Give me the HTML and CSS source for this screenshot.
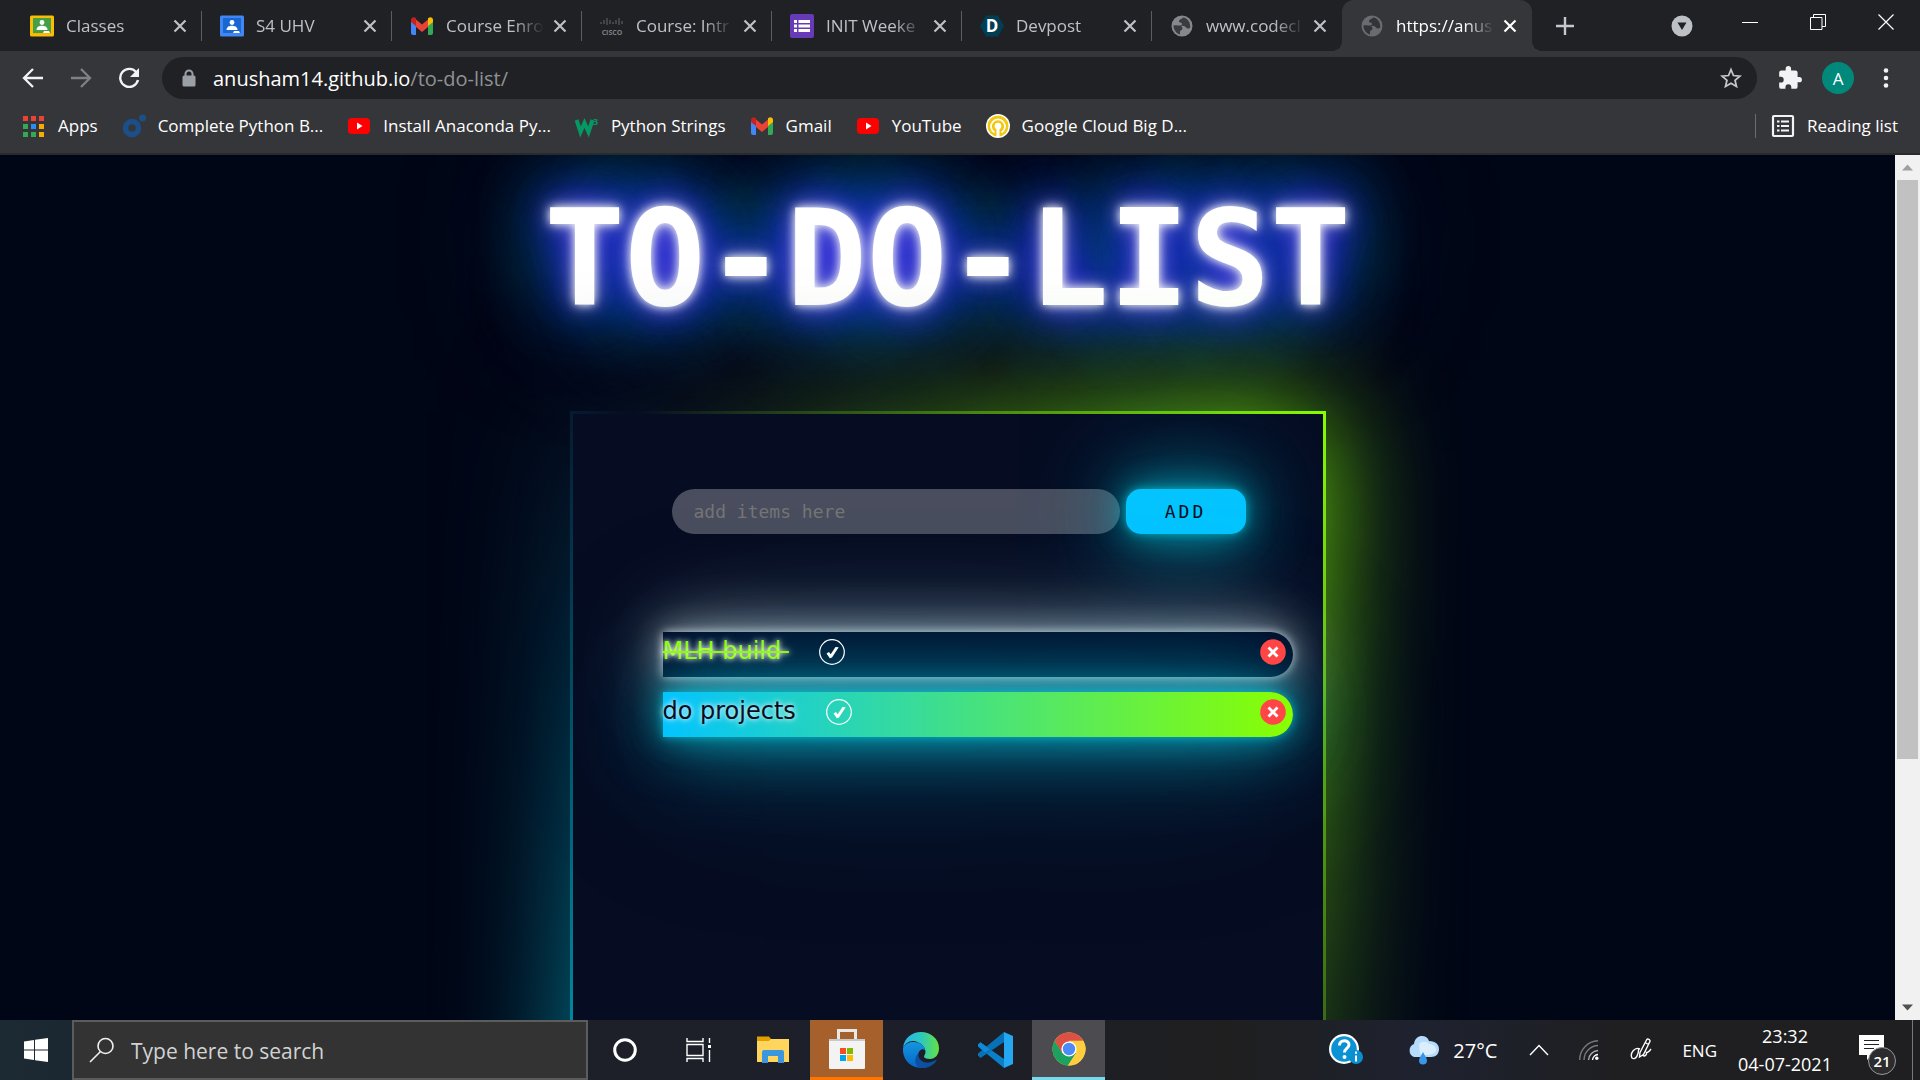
FILE: index.html
```html
<!DOCTYPE html>
<html lang="en">
<head>
<meta charset="utf-8">
<title>To-do list</title>
<link rel="stylesheet" href="styles.css">
</head>
<body>
<svg class="defs" aria-hidden="true">
  <symbol id="close" viewBox="0 0 14 14"><path d="M1.500 1.500l11 11M12.500 1.500l-11 11" stroke="currentColor" stroke-width="2.200" fill="none"/></symbol>
  <symbol id="gmail" viewBox="0 0 24 24"><path d="M1 6v13a2 2 0 0 0 2 2h3V9z" fill="#4285f4"/><path d="M23 6v13a2 2 0 0 1-2 2h-3V9z" fill="#34a853"/><path d="M6 5.500l6 5 6-5V13l-6 5-6-5z" fill="#ea4335"/><path d="M1 6.500V6c0-2.500 2.800-3.500 4.600-2L6 4.400V12l-5-4z" fill="#c5221f"/><path d="M23 6.500V6c0-2.500-2.800-3.500-4.600-2L18 4.400V12l5-4z" fill="#fbbc04"/></symbol>
  <symbol id="youtube" viewBox="0 0 24 24"><rect x="1" y="4" width="22" height="16" rx="4" fill="#f00"/><path d="M10 8.500v7l5.500-3.500z" fill="#fff"/></symbol>
  <symbol id="globe" viewBox="0 0 24 24"><circle cx="12" cy="12" r="10.500" fill="currentColor"/><path d="M13 3.500c-1 2-4 1.500-4 4 0 1.500 3 .8 3 2.500s-2 1.500-4 1.500-4-.5-4.500 0c0 4.500 3 8 6.500 9v-3c0-1 2.500-1.500 2.500-3s-1.500-2-1-2.500c2-.5 3.500.5 5 2 1 .8 3 .5 3.700-.5C20.500 8 17.500 4 13 3.500z" fill="#202124" opacity=".75"/></symbol>
  <symbol id="person" viewBox="0 0 24 24"><circle cx="12" cy="8.500" r="2.400" fill="#fff"/><path d="M6.500 16c0-3.500 3-4.300 5.500-4.300s5.500.8 5.500 4.300z" fill="#fff"/></symbol>
  <symbol id="tick" viewBox="0 0 26 26"><circle cx="13" cy="13" r="12.300" fill="none" stroke="#fff" stroke-width="1.200"/><path d="M7.500 14.500l2.500-1.500 1.700 2.300L16.500 8l3.200.2-6.700 10.300-2.200.8z" fill="#fff"/></symbol>
  <symbol id="cross" viewBox="0 0 26 26"><circle cx="13" cy="13" r="12.800" fill="#ff4545"/><path d="M8.500 8.500l9 9M17.500 8.500l-9 9" stroke="#fff" stroke-width="2.800"/></symbol>
</svg>

<div class="browser">
  <nav class="tabs" aria-label="Open tabs">
    <div class="tab">
      <svg class="fav" viewBox="0 0 24 24"><rect y="1.500" width="24" height="21" rx="1.500" fill="#fbbc04"/><rect x="3" y="4" width="18" height="15" fill="#43a047"/><rect x="3" y="19" width="18" height="1" fill="#f7b500"/><use href="#person"/><path d="M13 19h7l-1-2h-5z" fill="#fff"/></svg>
      <span class="tab-title">Classes</span>
      <button class="tab-close" aria-label="Close tab"><svg><use href="#close"/></svg></button>
    </div>
    <div class="tab">
      <svg class="fav" viewBox="0 0 24 24"><rect y="1.500" width="24" height="21" rx="1.500" fill="#4285f4"/><rect x="3" y="4" width="18" height="15" fill="#1967d2"/><use href="#person"/><path d="M13 19h7l-1-2h-5z" fill="#fff"/></svg>
      <span class="tab-title">S4 UHV</span>
      <button class="tab-close" aria-label="Close tab"><svg><use href="#close"/></svg></button>
    </div>
    <div class="tab">
      <svg class="fav"><use href="#gmail"/></svg>
      <span class="tab-title">Course Enro</span>
      <button class="tab-close" aria-label="Close tab"><svg><use href="#close"/></svg></button>
    </div>
    <div class="tab">
      <svg class="fav" viewBox="0 0 24 24"><path d="M1 8v2M4 6v4M7 4v7M10 6v4M13 8v2M16 6v4M19 4v7M22 7v3" stroke="#55585c" stroke-width="1.300"/><text class="cisco" x="12" y="21" text-anchor="middle">CISCO</text></svg>
      <span class="tab-title">Course: Intr</span>
      <button class="tab-close" aria-label="Close tab"><svg><use href="#close"/></svg></button>
    </div>
    <div class="tab">
      <svg class="fav" viewBox="0 0 24 24"><rect width="24" height="24" rx="2" fill="#673ab7"/><path d="M4 7.500h3M4 12h3M4 16.500h3M8.500 7.500H20M8.500 12H20M8.500 16.500H20" stroke="#fff" stroke-width="3"/></svg>
      <span class="tab-title">INIT Weeke</span>
      <button class="tab-close" aria-label="Close tab"><svg><use href="#close"/></svg></button>
    </div>
    <div class="tab">
      <svg class="fav" viewBox="0 0 24 24"><path d="M6 1.500h12L24 12l-6 10.500H6L0 12z" fill="#003e54"/><text class="devpost" x="12" y="18" text-anchor="middle">D</text></svg>
      <span class="tab-title">Devpost</span>
      <button class="tab-close" aria-label="Close tab"><svg><use href="#close"/></svg></button>
    </div>
    <div class="tab">
      <svg class="fav globe"><use href="#globe"/></svg>
      <span class="tab-title">www.codecl</span>
      <button class="tab-close" aria-label="Close tab"><svg><use href="#close"/></svg></button>
    </div>
    <div class="tab active">
      <svg class="fav globe"><use href="#globe"/></svg>
      <span class="tab-title">https://anus</span>
      <button class="tab-close" aria-label="Close tab"><svg><use href="#close"/></svg></button>
    </div>
    <button class="new-tab" aria-label="New tab"><svg width="18" height="18" viewBox="0 0 18 18"><path d="M9 0v18M0 9h18" stroke="#c4c7cb" stroke-width="2.400"/></svg></button>
    <div class="window-controls">
      <button class="search-tabs" aria-label="Search tabs"><svg width="22" height="22" viewBox="0 0 22 22"><circle cx="11" cy="11" r="10.500" fill="#bdc1c6"/><path d="M6.500 7.500h9L11 15z" fill="#202124"/></svg></button>
      <button aria-label="Minimize"><svg width="16" height="16" viewBox="0 0 16 16"><path d="M0 8.500h16" stroke="#fff"/></svg></button>
      <button aria-label="Restore"><svg width="16" height="16" viewBox="0 0 16 16"><path d="M.5 3.500h11.500v12H.5zM3.500 3.500v-3h12v12h-3.500" fill="none" stroke="#fff"/></svg></button>
      <button aria-label="Close"><svg width="16" height="16" viewBox="0 0 16 16"><path d="M.5.5l15 15M15.500.5l-15 15" stroke="#fff" stroke-width="1.200"/></svg></button>
    </div>
  </nav>

  <div class="toolbar">
    <button aria-label="Back"><svg width="22" height="22" viewBox="0 0 22 22"><path d="M21 11H2.500M11 2l-9 9 9 9" fill="none" stroke="#f1f3f4" stroke-width="2.300"/></svg></button>
    <button aria-label="Forward"><svg width="22" height="22" viewBox="0 0 22 22"><path d="M1 11h18.500M11 2l9 9-9 9" fill="none" stroke="#7e8185" stroke-width="2.300"/></svg></button>
    <button aria-label="Reload"><svg width="22" height="22" viewBox="0 0 22 22"><path d="M18.500 5.500A9 9 0 1 0 20 13" fill="none" stroke="#f1f3f4" stroke-width="2.400"/><path d="M21 1v9h-9z" fill="#f1f3f4"/></svg></button>
    <div class="omnibox">
      <svg width="14" height="18" viewBox="0 0 14 18"><path d="M3.500 7V5a3.500 3.500 0 0 1 7 0v2" fill="none" stroke="#9aa0a6" stroke-width="2"/><rect x="0.500" y="6.500" width="13" height="11" rx="1.500" fill="#9aa0a6"/></svg>
      <span class="url">anusham14.github.io<span class="path">/to-do-list/</span></span>
      <button class="star" aria-label="Bookmark this page"><svg width="22" height="22" viewBox="0 0 24 24"><path d="M12 2.800l2.700 6.500 7 .6-5.300 4.600 1.600 6.800-6-3.600-6 3.600 1.600-6.800L2.300 9.900l7-.6z" fill="none" stroke="#c4c7cb" stroke-width="1.900"/></svg></button>
    </div>
    <button aria-label="Extensions"><svg width="26" height="26" viewBox="0 0 24 24"><path fill="#f1f3f4" d="M20.500 11H19V7a2 2 0 0 0-2-2h-4V3.500a2.500 2.500 0 0 0-5 0V5H4a2 2 0 0 0-2 2v3.800h1.500a2.700 2.700 0 0 1 0 5.400H2V20a2 2 0 0 0 2 2h3.800v-1.500a2.700 2.700 0 0 1 5.400 0V22H17a2 2 0 0 0 2-2v-4h1.500a2.500 2.500 0 0 0 0-5z"/></svg></button>
    <button class="avatar" aria-label="Profile">A</button>
    <button aria-label="Menu"><svg width="6" height="20" viewBox="0 0 6 20"><g fill="#f1f3f4"><circle cx="3" cy="2.500" r="2.300"/><circle cx="3" cy="10" r="2.300"/><circle cx="3" cy="17.500" r="2.300"/></g></svg></button>
  </div>

  <nav class="bookmarks" aria-label="Bookmarks">
    <a href="#"><svg viewBox="0 0 24 24"><g fill="#ea4335"><path d="M1 2h5v5H1zM9 2h5v5H9zM17 2h5v5h-5z"/></g><path d="M1 10h5v5H1zM1 18h5v5H1zM9 18h5v5H9z" fill="#34a853"/><path d="M9 10h5v5H9z" fill="#2a8cf4"/><path d="M17 10h5v5h-5zM17 18h5v5h-5z" fill="#f9ab00"/></svg>Apps</a>
    <a href="#"><svg viewBox="0 0 24 24"><circle cx="10" cy="14" r="6.500" fill="none" stroke="#1c4f8a" stroke-width="5.500"/><circle cx="20.500" cy="4" r="3.500" fill="#1c4f8a"/></svg>Complete Python B...</a>
    <a href="#"><svg><use href="#youtube"/></svg>Install Anaconda Py...</a>
    <a href="#"><svg viewBox="0 0 24 24"><path d="M1.500 6l4 12 4-9 4 9 4-12" fill="none" stroke="#059862" stroke-width="4"/><text class="w-three" x="18" y="11">3</text></svg>Python Strings</a>
    <a href="#"><svg><use href="#gmail"/></svg>Gmail</a>
    <a href="#"><svg><use href="#youtube"/></svg>YouTube</a>
    <a href="#"><svg viewBox="0 0 24 24"><circle cx="12" cy="12" r="12" fill="#fff"/><circle cx="12" cy="12" r="10.500" fill="#f2c811"/><path d="M8.500 18.500A7 7 0 1 1 15.500 18.500" fill="none" stroke="#fff" stroke-width="1.700"/><circle cx="12" cy="12" r="3.300" fill="#fff"/><path d="M12 12v11" stroke="#fff" stroke-width="3"/></svg>Google Cloud Big D...</a>
    <a href="#" class="reading"><svg viewBox="0 0 24 24"><rect x="2" y="2" width="20" height="20" rx="1" fill="none" stroke="#f1f3f4" stroke-width="2.200"/><path d="M6 7.500h2.500M6 12h2.500M6 16.500h2.500M10 7.500h8M10 12h8M10 16.500h8" stroke="#f1f3f4" stroke-width="2"/></svg>Reading list</a>
  </nav>

  <div class="viewport">
    <main class="page">
      <h1>TO-DO-LIST</h1>
      <section class="box">
        <form class="add">
          <input type="text" placeholder="add items here" aria-label="New item">
          <button type="button">ADD</button>
        </form>
        <ul class="list">
          <li class="done"><span class="item-text">MLH build&nbsp;</span><button aria-label="Mark as done"><svg><use href="#tick"/></svg></button><button class="remove" aria-label="Remove"><svg><use href="#cross"/></svg></button></li>
          <li><span class="item-text">do projects</span><button aria-label="Mark as done"><svg><use href="#tick"/></svg></button><button class="remove" aria-label="Remove"><svg><use href="#cross"/></svg></button></li>
        </ul>
      </section>
    </main>
    <div class="scrollbar" aria-hidden="true">
      <svg viewBox="0 0 25 25"><path d="M7 15.500l5.500-6 5.500 6z" fill="#a0a0a0"/></svg>
      <div class="track"><div class="thumb"></div></div>
      <svg viewBox="0 0 25 25"><path d="M7 9.500l5.500 6 5.500-6z" fill="#505050"/></svg>
    </div>
  </div>
</div>

<footer class="taskbar">
  <button class="start" aria-label="Start"><svg width="24" height="24" viewBox="0 0 24 24"><path d="M0 3.500L10 2v9.500H0zM11 1.800L24 0v11.500H11zM0 12.500h10V22L0 20.500zM11 12.500h13V24l-13-1.800z" fill="#fff"/></svg></button>
  <label class="search">
    <svg width="26" height="26" viewBox="0 0 26 26"><circle cx="16.500" cy="9" r="7.500" fill="none" stroke="#f0f0f0" stroke-width="1.600"/><path d="M11.500 14.500L1 25" stroke="#f0f0f0" stroke-width="1.600"/></svg>
    <input type="text" placeholder="Type here to search" aria-label="Search">
  </label>
  <div class="apps">
    <button aria-label="Cortana"><svg width="26" height="26" viewBox="0 0 26 26"><circle cx="13" cy="13" r="10.300" fill="none" stroke="#fff" stroke-width="3"/></svg></button>
    <button aria-label="Task view"><svg width="26" height="24" viewBox="0 0 26 24"><path d="M1 0v3.500h16V0M1 24v-3.500h16V24M1 6.500h16v11H1zM23.500 0v5M23.500 12v12" fill="none" stroke="#fff" stroke-width="1.400"/><path d="M22 7h3v3h-3z" fill="#fff"/></svg></button>
    <button aria-label="File Explorer"><svg width="32" height="32" viewBox="0 0 32 32"><path d="M0 2.500h12l2 2.500v4H0z" fill="#e0a000"/><path d="M0 7h12l2-2h18v23H0z" fill="#ffd55e"/><path d="M5 29V18q0-2 2-2h18q2 0 2 2v11h-6v-7H11v7z" fill="#3b97dd"/></svg></button>
    <button class="store" aria-label="Microsoft Store"><svg width="36" height="42" viewBox="0 0 36 42"><path d="M9.500 14V2.500h17V14" fill="none" stroke="#e8e8e8" stroke-width="3"/><path d="M0 11h36v29q0 1-1 1H1q-1 0-1-1z" fill="#f3f3f3"/><path d="M0 11h36v2H0z" fill="#c9c9c9"/><path d="M11 20h6v6h-6z" fill="#f25022"/><path d="M18 20h6v6h-6z" fill="#7fba00"/><path d="M11 27h6v6h-6z" fill="#00a4ef"/><path d="M18 27h6v6h-6z" fill="#ffb900"/></svg></button>
    <button aria-label="Edge"><svg width="36" height="36" viewBox="0 0 36 36"><defs><linearGradient id="edge-top" x2="1"><stop stop-color="#2ab1e8"/><stop offset=".5" stop-color="#2cc8c0"/><stop offset="1" stop-color="#63e23f"/></linearGradient><linearGradient id="edge-low" y2="1" x2="0"><stop stop-color="#1595df"/><stop offset="1" stop-color="#0667c4"/></linearGradient></defs><path d="M0 16C1 6 9 0 18 0c10 0 18 7 18 16 0 7-4 11-9 11-4 0-6-1-6-2.500 0-1 1.500-2 1.500-4.500C22.500 14 16 9 10 9c-5 0-8 3-10 7z" fill="url(#edge-top)"/><path d="M0 16c2-4 6-6.500 11-6 7 0 11 5 11 8-3-2-7 1-7 6 0 5 6 10 13 8-3 3-6 4-10 4C8 36-1 28 0 16z" fill="url(#edge-low)"/><path d="M15.500 21c-1 6 4 10 10 9.500 4-.3 6-2 7.500-2.500.5 0 .8.300.5.800C30 34 24 36.500 18 36c-6-1-8-9-2.500-15z" fill="#0d4fa0"/></svg></button>
    <button aria-label="Visual Studio Code"><svg width="36" height="36" viewBox="0 0 36 36"><path d="M1 12.500l2.500-2L27 27v9L1 14.500z" fill="#0a80c8"/><path d="M1 23.500l2.500 2.500L27 10V0L1 21.500z" fill="#0672b5"/><path d="M27 0l9 4v28l-9 4z" fill="#25a6f0"/><path d="M1 12.500l2.500-2.300L13 17.500 8 20.500 1 14z" fill="#0f8ad6"/></svg></button>
    <button class="running" aria-label="Chrome"><svg width="34" height="34" viewBox="0 0 34 34"><circle cx="17" cy="17" r="16.500" fill="#ffcd40"/><path d="M2.700 8.700A16.500 16.500 0 0 1 31.300 8.700L17 9.500 9.500 21z" fill="#dd5144"/><path d="M2.700 8.700A16.500 16.500 0 0 0 16 33.500l8-12.500-14 0z" fill="#1aa260"/><path d="M16 33.500A16.500 16.500 0 0 0 31.300 8.700H17l7 12.500z" fill="#ffcd40"/><circle cx="17" cy="17" r="7.600" fill="#fff"/><circle cx="17" cy="17" r="6.200" fill="#4c8bf5"/></svg></button>
  </div>
  <div class="tray">
    <svg class="help" width="34" height="34" viewBox="0 0 34 34"><circle cx="15" cy="16" r="15" fill="#fff"/><circle cx="15" cy="16" r="12.800" fill="#0a92d4"/><path d="M10.500 12.500c0-6.500 9.500-6 9.500-.8 0 3.800-4.500 3.800-4.500 7.800" fill="none" stroke="#fff" stroke-width="3"/><circle cx="15.500" cy="24" r="2" fill="#fff"/><circle cx="27" cy="24" r="7" fill="#0a8fd0"/><path d="M27 22.500v6M27 18.500v2.300" stroke="#fff" stroke-width="2"/></svg>
    <span class="weather"><svg width="32" height="30" viewBox="0 0 32 30"><path d="M7 22a7 7 0 0 1 0-13C8-1 20-1 22 6c7 0 10 4 10 8 0 5-3 8-8 8z" fill="#b5dcfb"/><path d="M12 9c3-3 8-3 10 0 4 0 8 3 7 7-2 4-12 5-16 3z" fill="#dbeefe"/><path d="M16 17c2 4 4 6 4 8.500a4 4 0 0 1-8 0C12 23 14 21 16 17z" fill="#3b96e8"/></svg>27°C</span>
    <svg class="chevron" width="20" height="12" viewBox="0 0 20 12"><path d="M1 11l9-9.500L19 11" fill="none" stroke="#fff" stroke-width="1.400"/></svg>
    <svg class="wifi" width="20" height="20" viewBox="0 0 20 20"><g fill="none" stroke-width="1.400"><path d="M.7 20A19 19 0 0 1 19 .8M5 20A14.500 14.500 0 0 1 19 5.500" stroke="#77787c"/><path d="M9.500 20a10 10 0 0 1 9.500-9.500" stroke="#b0b0b2"/><path d="M13.500 20a6 6 0 0 1 5.500-5.500" stroke="#fff"/></g><circle cx="17.800" cy="18.200" r="1.700" fill="#fff"/></svg>
    <svg class="pen" width="22" height="26" viewBox="0 0 22 26"><path d="M10 15.500L16.500 3c1-2 4.300-.4 3.300 1.700L13.500 17.500 9.500 20zM15 5.500l3.500 2M10 12c-5-2.500-10.500 4-8 9 4 3 7-5 6.500-9.500M13 18.500c2 1.500 4-1 3.500-3 1.500.5 3-1.500 4.500-3.500" fill="none" stroke="#fff" stroke-width="1.400"/></svg>
    <span class="lang">ENG</span>
    <span class="clock"><span>23:32</span><span>04-07-2021</span></span>
    <span class="notify"><svg width="26" height="26" viewBox="0 0 26 26"><path d="M0 0h25v20H13l-5 5v-5H0z" fill="#fff"/><path d="M5 5.500h15M5 9.500h15M5 13.500h10" stroke="#222" stroke-width="1.200"/></svg><span class="count">21</span></span>
  </div>
</footer>
</body>
</html>
```
FILE: styles.css
```css
* { box-sizing: border-box; }

body {
  margin: 0;
  height: 100vh;
  display: flex;
  flex-direction: column;
  overflow: hidden;
  background: #000616;
  color: #fff;
  font-family: "Open Sans", "Noto Sans", sans-serif;
  font-size: 17px;
}

button {
  display: flex;
  align-items: center;
  justify-content: center;
  padding: 0;
  border: 0;
  background: none;
  color: inherit;
  font: inherit;
}

svg { display: block; flex: none; }
.defs { position: absolute; width: 0; height: 0; }

.browser {
  flex: 1;
  min-height: 0;
  display: flex;
  flex-direction: column;
}

/* Tab strip */
.tabs {
  height: 51px;
  flex: none;
  display: flex;
  padding-left: 12px;
  background: #202124;
}

.tab {
  flex: 0 1 190px;
  min-width: 0;
  display: flex;
  align-items: center;
  padding: 0 14px 0 18px;
  position: relative;
  color: #bdc1c6;
}

.tab:not(.active)::after {
  content: "";
  position: absolute;
  right: 0;
  top: 11px;
  width: 1px;
  height: 30px;
  background: #5b5d61;
}

.tab:nth-child(7)::after { display: none; }

.tab.active {
  border-radius: 12px 12px 0 0;
  background: #35363a;
  color: #fff;
}

.tab.active::before,
.tab.active::after {
  content: "";
  position: absolute;
  bottom: 0;
  width: 10px;
  height: 10px;
}

.tab.active::before { right: 100%; background: radial-gradient(circle at 0 0, transparent 10px, #35363a 10px); }
.tab.active::after { left: 100%; background: radial-gradient(circle at 100% 0, transparent 10px, #35363a 10px); }

.fav { width: 24px; height: 24px; }
.globe { color: #85888c; }
.active .globe { color: #686b70; }
.cisco { font: bold 7px "Open Sans", sans-serif; fill: #7c7f83; }
.devpost { font: bold 17px "Open Sans", sans-serif; fill: #fff; }
.w-three { font: bold 9px "Open Sans", sans-serif; fill: #059862; }

.tab-title {
  flex: 1;
  min-width: 0;
  margin: 0 4px 0 12px;
  white-space: nowrap;
  -webkit-mask-image: linear-gradient(90deg, #000 68px, transparent 98px);
  mask-image: linear-gradient(90deg, #000 68px, transparent 98px);
}

.tab-close { width: 16px; height: 24px; }
.tab-close svg { width: 14px; height: 14px; }

.new-tab { width: 66px; }

.window-controls {
  display: flex;
  margin-left: auto;
  height: 44px;
}

.window-controls button { width: 68px; }
.window-controls .search-tabs { height: 51px; }

/* Toolbar */
.toolbar {
  height: 54px;
  flex: none;
  display: flex;
  align-items: center;
  padding: 0 10px 0 9px;
  background: #35363a;
}

.toolbar > button { width: 48px; }

.omnibox {
  flex: 1;
  height: 42px;
  display: flex;
  align-items: center;
  margin: 0 9px;
  padding: 0 15px 0 20px;
  border-radius: 21px;
  background: #202124;
}

.url { flex: 1; margin-left: 17px; font-size: 20px; }
.path { color: #8f9297; }

.toolbar .avatar {
  width: 32px;
  height: 32px;
  margin: 0 8px;
  border-radius: 50%;
  background: #00897b;
}

/* Bookmarks bar */
.bookmarks {
  height: 50px;
  flex: none;
  display: flex;
  align-items: center;
  gap: 24px;
  padding: 0 22px 7px;
  border-bottom: 2px solid #292a2c;
  background: #35363a;
}

.bookmarks a {
  display: flex;
  align-items: center;
  gap: 12px;
  color: #fff;
  text-decoration: none;
  white-space: nowrap;
}

.bookmarks svg { width: 24px; height: 24px; }

.bookmarks .reading {
  margin-left: auto;
  padding-left: 15px;
  border-left: 1px solid #6a6c70;
}

/* Page */
.viewport {
  flex: 1;
  min-height: 0;
  display: flex;
  overflow: hidden;
}

.page {
  flex: 1;
  display: flex;
  flex-direction: column;
  align-items: center;
  overflow: hidden;
  background: #000616;
}

h1 {
  margin: 0;
  padding: 26px 0 77px;
  font: bold 134px/156px "DejaVu Sans Mono", monospace;
  text-shadow:
    0 0 10px #fff,
    0 0 20px rgba(255, 255, 255, 0.6),
    0 0 40px #2d14e6,
    0 0 50px #2d14e6,
    0 0 80px #0a64c8,
    0 0 90px #0073a0,
    0 0 100px #007896,
    0 0 150px #006e78;
}

.box {
  position: relative;
  z-index: 0;
  flex: none;
  width: 750px;
  max-width: 90%;
  min-height: 900px;
  padding: 75px 30px 0 90px;
}

.box::before,
.box::after {
  content: "";
  position: absolute;
  inset: -3px;
  z-index: -1;
  background: linear-gradient(235deg, #89ff00, #060c21, #00bcd4);
}

.box::after { filter: blur(60px); z-index: -2; }

.box::before {
  border: 3px solid transparent;
  background: linear-gradient(#060c21, #060c21) padding-box, linear-gradient(235deg, #89ff00, #060c21, #00bcd4) border-box;
}

.add {
  display: flex;
  gap: 6px;
  padding: 0 47px 0 9px;
}

.add input {
  flex: 1;
  min-width: 0;
  height: 45px;
  padding: 0 22px;
  border: 0;
  border-radius: 23px;
  background: rgba(255, 255, 255, 0.27);
  color: #fff;
  font: 18px "DejaVu Sans Mono", monospace;
}

.add input::placeholder { color: #757575; }

.add button,
.list li {
  box-shadow:
    0 0 10px rgba(3, 215, 235, 0.6),
    0 0 30px rgba(3, 200, 220, 0.5),
    0 0 60px rgba(3, 200, 220, 0.5),
    0 0 100px rgba(3, 190, 220, 0.7),
    0 0 200px rgba(3, 160, 220, 0.3);
}

.add button {
  width: 120px;
  height: 45px;
  border-radius: 15px;
  background: #03c4ff;
  color: #060c21;
  font: 18px "DejaVu Sans Mono", monospace;
  letter-spacing: 3px;
}

.list {
  display: flex;
  flex-direction: column;
  gap: 15px;
  margin: 98px 0 0;
  padding: 0;
  list-style: none;
}

.list li {
  height: 45px;
  display: flex;
  align-items: flex-start;
  padding: 7px 7px 0 0;
  border-radius: 0 23px 23px 0;
  background: linear-gradient(90deg, #03c4ff, #89ff00);
  color: #060c21;
}

.list .done {
  background: #000a24;
  color: #89ff00;
  box-shadow:
    0 0 10px rgba(255, 255, 255, 0.7),
    0 0 30px rgba(255, 255, 255, 0.4),
    0 0 60px rgba(255, 255, 255, 0.4),
    0 0 100px rgba(255, 255, 255, 0.35);
}

.item-text {
  margin-right: 30px;
  font: 24px/24px "DejaVu Sans", sans-serif;
  text-shadow: 0 0 5px #fff, 0 0 10px rgba(255, 255, 255, 0.5);
}

.done .item-text { text-decoration: line-through 2px; }

.list button,
.item-text { position: relative; z-index: 1; }

.list svg { width: 26px; height: 26px; }
.list .remove { margin-left: auto; }

.scrollbar {
  width: 25px;
  display: flex;
  flex-direction: column;
  background: #f1f1f1;
}

.track { flex: 1; padding: 0 2px; }
.thumb { height: 71%; background: #c1c1c1; }

/* Taskbar */
.taskbar {
  height: 60px;
  flex: none;
  display: flex;
  background: linear-gradient(90deg, #1c2a33, #1e2029 20%, #1c1e29 48%, #1f1f20 64%, #1e222f 74%, #1f1f22 84%, #1f1f21);
}

.start { width: 72px; }

.search {
  flex: 0 1 516px;
  display: flex;
  align-items: center;
  gap: 16px;
  padding: 0 15px;
  border: 2px solid #5c5c5c;
  background: #333;
}

.search input {
  flex: 1;
  min-width: 0;
  padding: 2px 0 0;
  border: 0;
  background: none;
  color: #fff;
  font: 21px "Open Sans", sans-serif;
}

.search input::placeholder { color: #d2d2d2; }

.apps { display: flex; gap: 1px; }
.apps button { width: 73px; }
.apps .store { background: #a6602b; border-bottom: 3px solid #ff7400; }
.apps .running { background: #4b4b50; border-bottom: 3px solid #76d9f0; }

.tray {
  display: flex;
  align-items: center;
  margin-left: auto;
  padding-right: 15px;
  border-right: 1px solid #77787c;
  margin-right: 7px;
}

.help { margin-right: 44px; }
.weather { display: flex; align-items: center; gap: 14px; font-size: 20px; margin-right: 32px; }
.chevron { margin-right: 30px; }
.wifi { margin-right: 31px; }
.pen { margin-right: 30px; }
.lang { margin-right: 20px; }
.clock { width: 96px; display: flex; flex-direction: column; align-items: center; font-size: 18px; line-height: 28px; margin-right: 26px; }
.notify { position: relative; width: 38px; padding-bottom: 4px; }

.count {
  position: absolute;
  left: 9px;
  top: 12px;
  width: 28px;
  height: 28px;
  border: 1px solid #98989a;
  border-radius: 50%;
  background: #2c2c2e;
  font-size: 15px;
  font-weight: 600;
  line-height: 26px;
  text-align: center;
}
```
